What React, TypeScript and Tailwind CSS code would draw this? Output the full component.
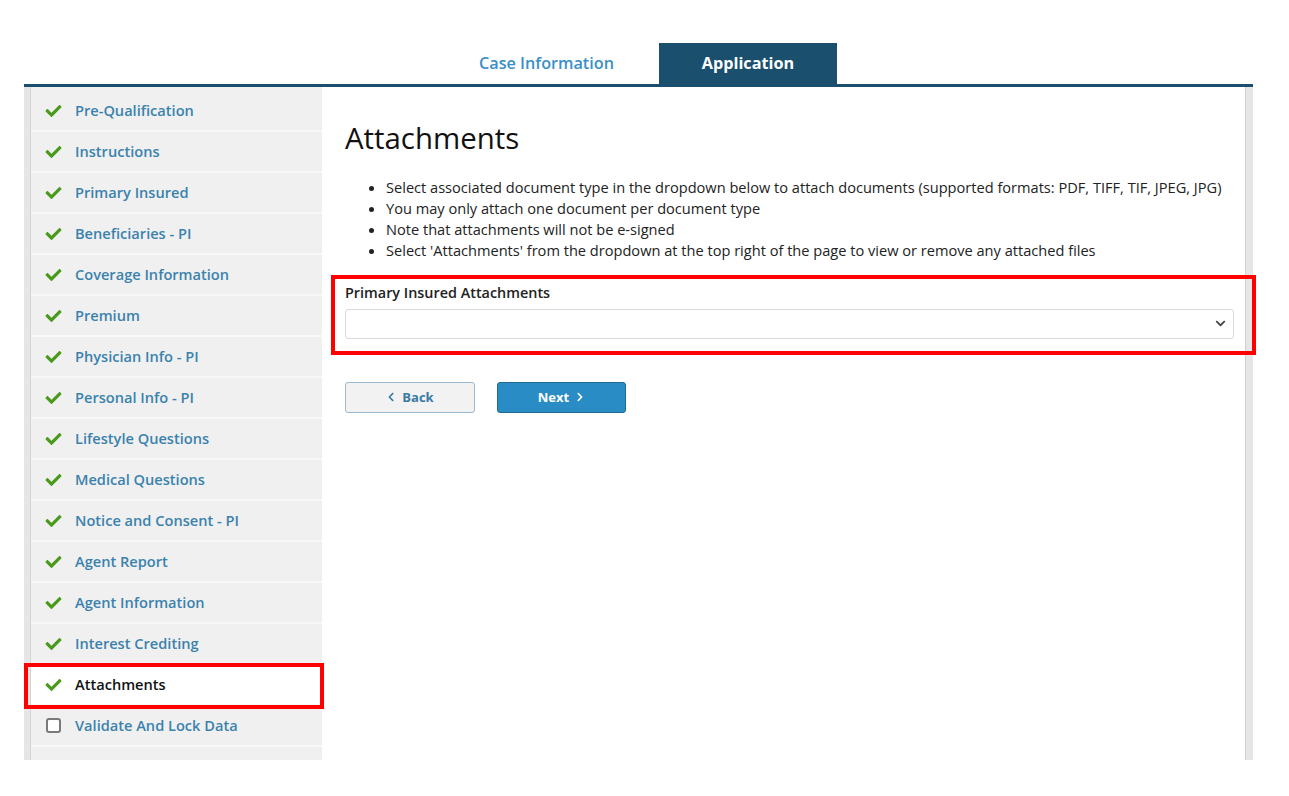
import { FaCheck, FaChevronDown, FaChevronLeft, FaChevronRight } from 'react-icons/fa'

const steps = [
  'Pre-Qualification',
  'Instructions',
  'Primary Insured',
  'Beneficiaries - PI',
  'Coverage Information',
  'Premium',
  'Physician Info - PI',
  'Personal Info - PI',
  'Lifestyle Questions',
  'Medical Questions',
  'Notice and Consent - PI',
  'Agent Report',
  'Agent Information',
  'Interest Crediting',
  'Attachments',
  'Validate And Lock Data',
]

const notes = [
  'Select associated document type in the dropdown below to attach documents (supported formats: PDF, TIFF, TIF, JPEG, JPG)',
  'You may only attach one document per document type',
  'Note that attachments will not be e-signed',
  "Select 'Attachments' from the dropdown at the top right of the page to view or remove any attached files",
]

export default function App() {
  const active = 'Attachments'

  return (
    <div
      className="min-h-screen bg-white pt-[43px] pl-[24px] text-[#222]"
      style={{ fontFamily: '"Open Sans", "Noto Sans", sans-serif' }}
    >
      <div className="w-[1229px]">
        {/* Tabs */}
        <div className="flex h-[41px] items-stretch pl-[431px]">
          <div className="flex items-center px-6 text-[16.2px] font-semibold text-[#3a8fc6]">
            Case Information
          </div>
          <div className="ml-[21px] flex w-[178px] items-center justify-center bg-[#1a4f6d] text-[16.2px] font-bold text-white">
            Application
          </div>
        </div>
        <div className="h-[3px] bg-[#1a4f6d]" />

        {/* Body */}
        <div className="flex h-[673px]">
          <div className="w-[7px] border-r border-[#d4d4d4] bg-[#e6e6e6]" />

          {/* Sidebar */}
          <aside className="w-[291px] bg-[#f0f0f0] pt-[4px]">
            <ul>
              {steps.map((s, i) => {
                const isActive = s === active
                const done = i < steps.length - 1
                return (
                  <li
                    key={s}
                    className={
                      'relative flex h-[41px] items-center border-b-2 border-[#f8f8f8] pl-[14px] text-[14.6px] font-semibold ' +
                      (isActive ? 'bg-white text-[#111]' : 'text-[#3a82ad]')
                    }
                  >
                    {done ? (
                      <FaCheck className="w-[17px] text-[#4a9a1c]" size={16} />
                    ) : (
                      <span className="ml-[1px] mr-[1px] block h-[15px] w-[15px] rounded-[3px] border-2 border-[#7a7a7a] bg-white" />
                    )}
                    <span className="ml-[13px]">{s}</span>
                    {isActive && (
                      <span className="pointer-events-none absolute -top-[2px] -bottom-[5px] -left-[7px] -right-[2px] border-[4px] border-[#ff0000]" />
                    )}
                  </li>
                )
              })}
            </ul>
          </aside>

          {/* Main */}
          <main className="flex-1 pt-[35px] pl-[23px] pr-[11px]">
            <h1 className="text-[29.4px] leading-[1.15] font-normal text-[#111]">Attachments</h1>
            <ul className="mt-[21px] list-disc pl-[41px] text-[14.6px] leading-[21px] text-[#222]">
              {notes.map((n) => (
                <li key={n}>{n}</li>
              ))}
            </ul>

            <div className="relative mt-[21px]">
              <div className="text-[14.4px] leading-[21px] font-semibold text-[#222]">Primary Insured Attachments</div>
              <div className="mt-[6px] flex h-[30px] items-center justify-end rounded-[3px] border border-[#d9d9d9] bg-white pr-[7px]">
                <FaChevronDown className="text-[#444]" size={11} />
              </div>
              <span className="pointer-events-none absolute -top-[7px] -bottom-[16px] -left-[14px] -right-[22px] border-[4px] border-[#ff0000]" />
            </div>

            <div className="mt-[43px] flex gap-[22px]">
              <button className="flex h-[31px] w-[130px] items-center justify-center gap-[6px] rounded-[3px] border border-[#9bb9d0] bg-[#f2f2f2] text-[13px] font-bold text-[#3a7aa3]">
                <FaChevronLeft size={10} />
                Back
              </button>
              <button className="flex h-[31px] w-[129px] items-center justify-center gap-[6px] rounded-[3px] border border-[#1d6a98] bg-[#2a8cc5] text-[13px] font-bold text-white">
                Next
                <FaChevronRight size={10} />
              </button>
            </div>
          </main>

          <div className="w-[8px] border-l border-[#d0d0d0] bg-[#e6e6e6]" />
        </div>
      </div>
    </div>
  )
}
